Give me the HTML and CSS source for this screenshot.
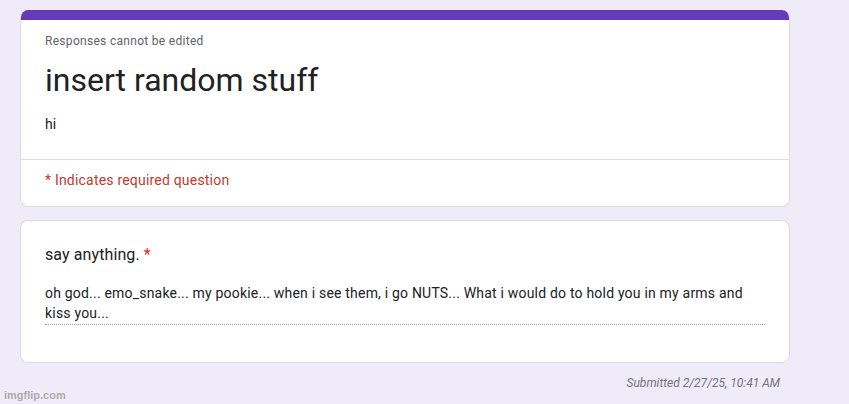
FILE: index.html
```html
<!DOCTYPE html>
<html>
<head>
<meta charset="utf-8">
<link rel="stylesheet" href="styles.css">
</head>
<body>
<div class="page">
  <div class="card header-card">
    <div class="bar"></div>
    <div class="header-body">
      <div class="note">Responses cannot be edited</div>
      <div class="title">insert random stuff</div>
      <div class="desc">hi</div>
    </div>
    <div class="header-foot">* Indicates required question</div>
  </div>
  <div class="card question-card">
    <div class="question">say anything. <span class="req">*</span></div>
    <div class="answer">oh god... emo_snake... my pookie... when i see them, i go NUTS... What i would do to hold you in my arms and kiss you...</div>
  </div>
  <div class="submitted">Submitted 2/27/25, 10:41 AM</div>
</div>
<div class="watermark">imgflip.com</div>
</body>
</html>
```
FILE: styles.css
```css
html, body {
  margin: 0;
  padding: 0;
}
body {
  background: #f0ebf8;
  font-family: Roboto, "Liberation Sans", Arial, sans-serif;
  color: #202124;
  width: 849px;
  height: 404px;
  overflow: hidden;
  position: relative;
}
.page {
  width: 770px;
  margin-left: 20px;
  padding-top: 10px;
  display: flex;
  flex-direction: column;
  gap: 13px;
}
.card {
  background: #fff;
  border: 1px solid #dadce0;
  border-radius: 8px;
  box-sizing: border-box;
  overflow: hidden;
}
.header-card {
  border-top: none;
}
.bar {
  height: 10px;
  background: #673ab7;
  margin: 0 -1px;
}
.header-body {
  padding: 13px 24px 25px 24px;
  border-bottom: 1px solid #dadce0;
}
.note {
  font-size: 12px;
  line-height: 16px;
  color: #5f6368;
  letter-spacing: 0.3px;
}
.title {
  font-size: 32px;
  line-height: 40px;
  margin-top: 11px;
  color: #202124;
}
.desc {
  font-size: 14px;
  line-height: 20px;
  margin-top: 14px;
  color: #202124;
}
.header-foot {
  padding: 10px 24px 16px 24px;
  font-size: 14px;
  line-height: 20px;
  color: #c5392d;
  letter-spacing: 0.2px;
}
.question-card {
  padding: 22px 24px 37px 24px;
}
.question {
  font-size: 16px;
  line-height: 24px;
  color: #202124;
  letter-spacing: 0.1px;
}
.req {
  color: #d93025;
}
.answer {
  margin-top: 16px;
  font-size: 14px;
  line-height: 20px;
  color: #202124;
  letter-spacing: 0.2px;
  padding-bottom: 1px;
  border-bottom: 1px dotted #9aa0a6;
  padding-right: 0;
}
.submitted {
  text-align: right;
  padding-right: 10px;
  font-size: 12px;
  line-height: 16px;
  font-style: italic;
  color: #70757a;
  margin-top: -1px;
}
.watermark {
  position: absolute;
  left: 4px;
  top: 388px;
  font-size: 11px;
  line-height: 14px;
  font-weight: bold;
  color: rgba(140,140,140,0.7);
  font-family: "Liberation Sans", Arial, sans-serif;
}
```
